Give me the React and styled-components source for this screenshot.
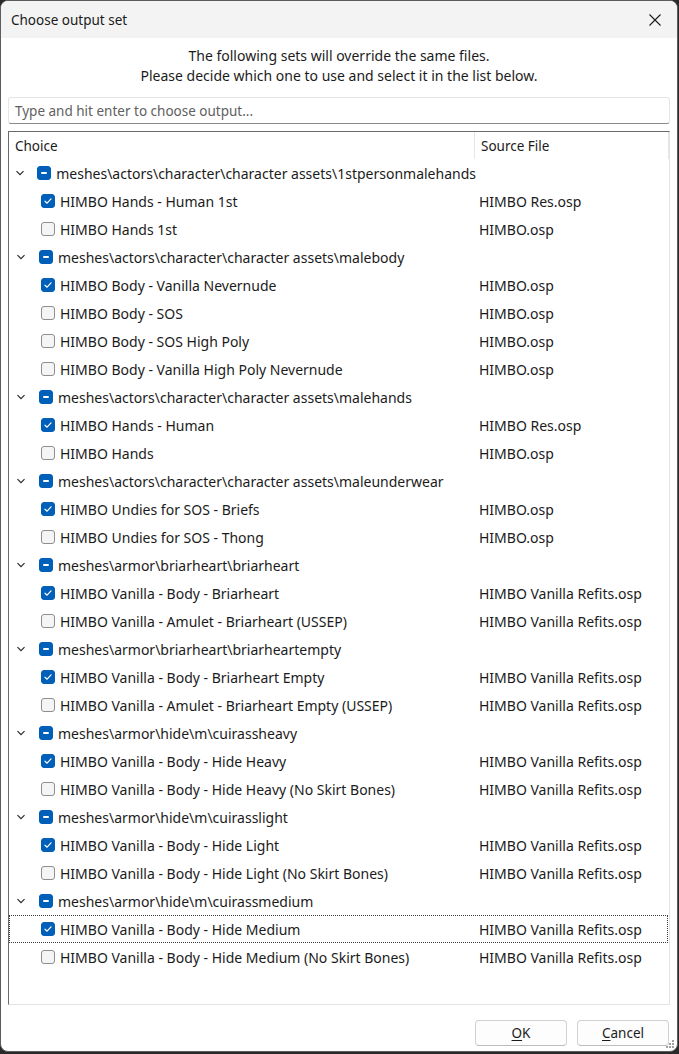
import React from 'react';
import styled, { createGlobalStyle, css } from 'styled-components';

const GlobalStyle = createGlobalStyle`
  html, body {
    margin: 0;
    padding: 0;
    background: #2a2a2a;
  }
  body {
    font-family: "Segoe UI", "Noto Sans", "Open Sans", sans-serif;
    font-size: 14px;
    color: #1b1b1b;
  }
`;

const groups = [
  {
    path: 'meshes\\actors\\character\\character assets\\1stpersonmalehands',
    items: [
      { name: 'HIMBO Hands - Human 1st', file: 'HIMBO Res.osp', checked: true },
      { name: 'HIMBO Hands 1st', file: 'HIMBO.osp' },
    ],
  },
  {
    path: 'meshes\\actors\\character\\character assets\\malebody',
    items: [
      { name: 'HIMBO Body - Vanilla Nevernude', file: 'HIMBO.osp', checked: true },
      { name: 'HIMBO Body - SOS', file: 'HIMBO.osp' },
      { name: 'HIMBO Body - SOS High Poly', file: 'HIMBO.osp' },
      { name: 'HIMBO Body - Vanilla High Poly Nevernude', file: 'HIMBO.osp' },
    ],
  },
  {
    path: 'meshes\\actors\\character\\character assets\\malehands',
    items: [
      { name: 'HIMBO Hands - Human', file: 'HIMBO Res.osp', checked: true },
      { name: 'HIMBO Hands', file: 'HIMBO.osp' },
    ],
  },
  {
    path: 'meshes\\actors\\character\\character assets\\maleunderwear',
    items: [
      { name: 'HIMBO Undies for SOS - Briefs', file: 'HIMBO.osp', checked: true },
      { name: 'HIMBO Undies for SOS - Thong', file: 'HIMBO.osp' },
    ],
  },
  {
    path: 'meshes\\armor\\briarheart\\briarheart',
    items: [
      { name: 'HIMBO Vanilla - Body - Briarheart', file: 'HIMBO Vanilla Refits.osp', checked: true },
      { name: 'HIMBO Vanilla - Amulet - Briarheart (USSEP)', file: 'HIMBO Vanilla Refits.osp' },
    ],
  },
  {
    path: 'meshes\\armor\\briarheart\\briarheartempty',
    items: [
      { name: 'HIMBO Vanilla - Body - Briarheart Empty', file: 'HIMBO Vanilla Refits.osp', checked: true },
      { name: 'HIMBO Vanilla - Amulet - Briarheart Empty (USSEP)', file: 'HIMBO Vanilla Refits.osp' },
    ],
  },
  {
    path: 'meshes\\armor\\hide\\m\\cuirassheavy',
    items: [
      { name: 'HIMBO Vanilla - Body - Hide Heavy', file: 'HIMBO Vanilla Refits.osp', checked: true },
      { name: 'HIMBO Vanilla - Body - Hide Heavy (No Skirt Bones)', file: 'HIMBO Vanilla Refits.osp' },
    ],
  },
  {
    path: 'meshes\\armor\\hide\\m\\cuirasslight',
    items: [
      { name: 'HIMBO Vanilla - Body - Hide Light', file: 'HIMBO Vanilla Refits.osp', checked: true },
      { name: 'HIMBO Vanilla - Body - Hide Light (No Skirt Bones)', file: 'HIMBO Vanilla Refits.osp' },
    ],
  },
  {
    path: 'meshes\\armor\\hide\\m\\cuirassmedium',
    items: [
      { name: 'HIMBO Vanilla - Body - Hide Medium', file: 'HIMBO Vanilla Refits.osp', checked: true, focused: true },
      { name: 'HIMBO Vanilla - Body - Hide Medium (No Skirt Bones)', file: 'HIMBO Vanilla Refits.osp' },
    ],
  },
];

const Window = styled.div`
  box-sizing: border-box;
  width: 678px;
  height: 1052px;
  background: #ffffff;
  border: 1px solid #5c5c5c;
  border-radius: 8px;
  overflow: hidden;
  display: flex;
  flex-direction: column;
  position: relative;
`;

const TitleBar = styled.div`
  height: 37px;
  background: #f3f3f3;
  display: flex;
  align-items: center;
  justify-content: space-between;
  padding: 0 10px 0 10px;
  flex-shrink: 0;
`;

const Title = styled.div`
  font-size: 13.5px;
  color: #1b1b1b;
`;

const CloseButton = styled.div`
  width: 24px;
  height: 24px;
  display: flex;
  align-items: center;
  justify-content: center;
`;

const Message = styled.div`
  text-align: center;
  line-height: 20px;
  padding: 8px 0 0;
  font-size: 14px;
`;

const Filter = styled.div`
  margin: 11px 7px 0 7px;
  height: 27px;
  box-sizing: border-box;
  border: 1px solid #e5e5e5;
  border-bottom-color: #8a8a8a;
  border-radius: 3px;
  display: flex;
  align-items: center;
  padding-left: 6px;
  color: #616161;
  font-size: 13.5px;
`;

const Tree = styled.div`
  margin: 7px 7px 0 7px;
  height: 874px;
  box-sizing: border-box;
  border: 1px solid #e3e3e3;
  border-top-color: #6a6a6a;
  border-left-color: #6a6a6a;
  display: flex;
  flex-direction: column;
`;

const columns = css`
  display: grid;
  grid-template-columns: 466px 194px;
`;

const Header = styled.div`
  ${columns};
  height: 27px;
  flex-shrink: 0;
`;

const HeaderCell = styled.div`
  display: flex;
  align-items: center;
  padding-left: ${({ $pad }) => $pad}px;
  border-right: 1px solid #e5e5e5;
  font-size: 13.5px;
`;

const Row = styled.div`
  ${columns};
  height: 28px;
  box-sizing: border-box;
  border: 1px dotted ${({ $focused }) => ($focused ? '#3a3a3a' : 'transparent')};
  margin-right: 1px;
`;

const NameCell = styled.div`
  display: flex;
  align-items: center;
  padding-left: ${({ $indent }) => $indent}px;
  white-space: nowrap;
`;

const FileCell = styled.div`
  display: flex;
  align-items: center;
  padding-left: 3px;
  white-space: nowrap;
`;

const Chevron = styled.div`
  width: 12px;
  height: 12px;
  display: flex;
  align-items: center;
  justify-content: center;
  margin-right: 12px;
`;

const Check = styled.div`
  width: 14px;
  height: 14px;
  box-sizing: border-box;
  border-radius: 3px;
  margin-right: 5px;
  flex-shrink: 0;
  display: flex;
  align-items: center;
  justify-content: center;
  background: ${({ $state }) => ($state === 'off' ? '#f5f5f5' : '#005fb8')};
  border: 1px solid ${({ $state }) => ($state === 'off' ? '#8d8d8d' : '#005fb8')};
`;

const Dash = styled.div`
  width: 6px;
  height: 2px;
  background: #ffffff;
  border-radius: 1px;
`;

const Footer = styled.div`
  display: flex;
  justify-content: flex-end;
  gap: 10px;
  padding: 15px 8px 0 0;
`;

const Button = styled.div`
  width: 92px;
  height: 26px;
  box-sizing: border-box;
  border: 1px solid #d1d1d1;
  border-bottom-color: #bcbcbc;
  border-radius: 4px;
  background: #fdfdfd;
  display: flex;
  align-items: center;
  justify-content: center;
  font-size: 13.5px;

  u {
    text-decoration-thickness: 1px;
    text-underline-offset: 2px;
  }
`;

const Grip = styled.svg`
  position: absolute;
  right: 2px;
  bottom: 2px;
`;

const CheckBox = ({ state }) => (
  <Check $state={state}>
    {state === 'on' && (
      <svg width="10" height="10" viewBox="0 0 10 10">
        <path d="M2 5.2 L4.1 7.2 L8 2.8" fill="none" stroke="#fff" strokeWidth="1.2" strokeLinecap="round" strokeLinejoin="round" />
      </svg>
    )}
    {state === 'partial' && <Dash />}
  </Check>
);

const App = () => (
  <>
    <GlobalStyle />
    <Window>
      <TitleBar>
        <Title>Choose output set</Title>
        <CloseButton>
          <svg width="14" height="14" viewBox="0 0 14 14">
            <path d="M1.5 1.5 L12.5 12.5 M12.5 1.5 L1.5 12.5" stroke="#1b1b1b" strokeWidth="1.1" />
          </svg>
        </CloseButton>
      </TitleBar>
      <Message>
        The following sets will override the same files.
        <br />
        Please decide which one to use and select it in the list below.
      </Message>
      <Filter>Type and hit enter to choose output...</Filter>
      <Tree>
        <Header>
          <HeaderCell $pad={6}>Choice</HeaderCell>
          <HeaderCell $pad={6}>Source File</HeaderCell>
        </Header>
        {groups.map((g) => (
          <React.Fragment key={g.path}>
            <Row>
              <NameCell $indent={5}>
                <Chevron>
                  <svg width="10" height="10" viewBox="0 0 10 10">
                    <path d="M1.5 3.2 L5 6.7 L8.5 3.2" fill="none" stroke="#2a2a2a" strokeWidth="1.2" />
                  </svg>
                </Chevron>
                <CheckBox state="partial" />
                {g.path}
              </NameCell>
              <FileCell />
            </Row>
            {g.items.map((it) => (
              <Row key={it.name} $focused={it.focused}>
                <NameCell $indent={31}>
                  <CheckBox state={it.checked ? 'on' : 'off'} />
                  {it.name}
                </NameCell>
                <FileCell>{it.file}</FileCell>
              </Row>
            ))}
          </React.Fragment>
        ))}
      </Tree>
      <Footer>
        <Button>
          <span><u>O</u>K</span>
        </Button>
        <Button>
          <span><u>C</u>ancel</span>
        </Button>
      </Footer>
      <Grip width="10" height="10" viewBox="0 0 10 10">
        <g fill="#a0a0a0">
          <rect x="7" y="1" width="2" height="2" />
          <rect x="4" y="4" width="2" height="2" />
          <rect x="7" y="4" width="2" height="2" />
          <rect x="1" y="7" width="2" height="2" />
          <rect x="4" y="7" width="2" height="2" />
          <rect x="7" y="7" width="2" height="2" />
        </g>
      </Grip>
    </Window>
  </>
);

export default App;
